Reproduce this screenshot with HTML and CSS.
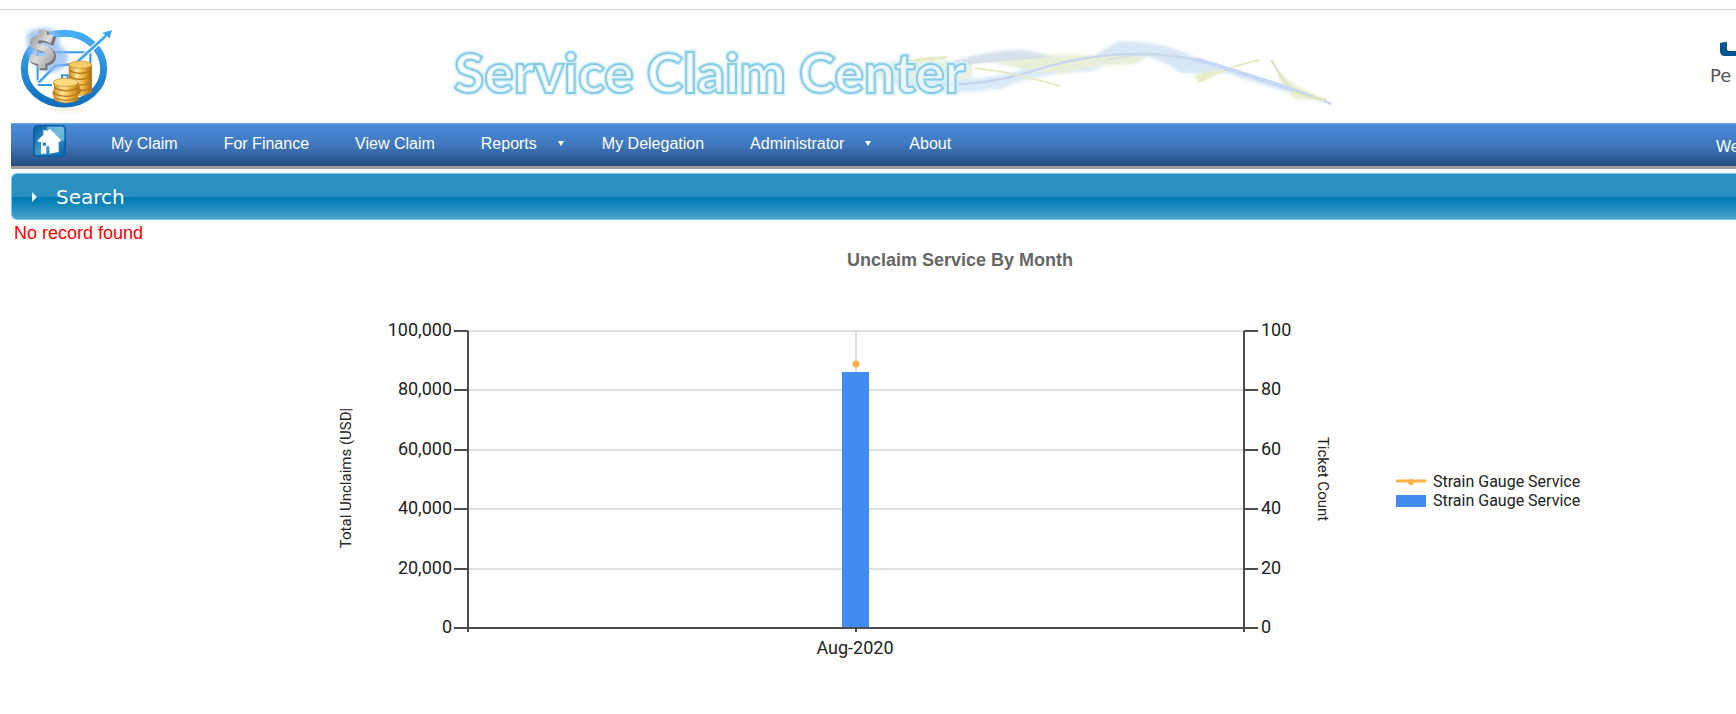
FILE: index.html
```html
<!DOCTYPE html>
<html lang="en">
<head>
<meta charset="utf-8">
<title>Service Claim Center</title>
<link rel="stylesheet" href="styles.css">
</head>
<body>
<div class="page">
  <header class="header">
    <svg class="logo" viewBox="33 30 360 330" role="img" aria-label="Claims logo">
      <defs>
        <linearGradient id="ring" x1="0" y1="0" x2="0" y2="1"><stop offset="0" stop-color="#45adfa"/><stop offset="1" stop-color="#116fbc"/></linearGradient>
        <linearGradient id="gold" x1="0" y1="0" x2="1" y2="0"><stop offset="0" stop-color="#c98a1c"/><stop offset=".35" stop-color="#ffe79a"/><stop offset=".65" stop-color="#e9b03c"/><stop offset="1" stop-color="#a96a10"/></linearGradient>
        <linearGradient id="steel" x1="0" y1="0" x2="1" y2="1"><stop offset="0" stop-color="#888"/><stop offset=".5" stop-color="#ddd"/><stop offset="1" stop-color="#999"/></linearGradient>
        <filter id="soft" x="-50%" y="-50%" width="200%" height="200%"><feGaussianBlur stdDeviation="7"/></filter>
      </defs>
      <ellipse cx="205" cy="328" rx="55" ry="6" fill="#e8c994" opacity=".4" filter="url(#soft)"/>
      <ellipse cx="192" cy="206" rx="119" ry="106" fill="none" stroke="url(#ring)" stroke-width="21"/>
      <path d="M113 245V157H271V245M113 255H156M186 238V226H203V238" fill="none" stroke="#3399e6" stroke-width="6"/>
      <path d="M116 248L166 197L225 192L318 107" fill="none" stroke="#fff" stroke-width="15"/>
      <path d="M116 248L166 197L225 192L318 107" fill="none" stroke="#3da4f2" stroke-width="8"/>
      <path d="M336 90L307 99L329 115Z" fill="#3da4f2"/>
      <path d="M80 102Q115 72 166 92Q185 112 177 137Q215 155 198 193Q165 230 122 207Q84 184 83 139Z" fill="#8db8f3" opacity=".75" filter="url(#soft)"/>
      <path d="M164 113L143 111V97H125V111Q99 113 98 132Q99 148 127 152Q151 158 145 173Q131 183 99 169L94 184Q105 194 122 195V207H139V194Q164 190 165 169Q164 147 132 141Q111 136 119 126Q133 119 158 133Z" fill="#777" stroke="#777" stroke-width="7"/>
      <path d="M157 107L138 106V92H120V106Q94 109 92 128Q93 145 121 149Q144 155 139 168Q125 178 94 164L89 179Q101 189 117 190V202H134V189Q158 185 160 165Q158 142 127 136Q106 131 113 121Q127 113 151 127Z" fill="url(#steel)" stroke="url(#steel)" stroke-width="5"/>
      <g fill="url(#gold)" stroke="#c98a2a" stroke-width="2">
        <path d="M207 194V278Q240 296 275 275V194Z"/>
        <path d="M207 211Q240 230 275 211M207 229Q240 248 275 229M207 246Q240 265 275 246M207 263Q240 281 275 263" fill="none" stroke="#b87816" stroke-width="4"/>
        <ellipse cx="241" cy="194" rx="34" ry="11" fill="#f8cc67"/>
        <path d="M160 248L164 262L158 278L164 300Q199 318 235 299L233 286L243 274L235 248Z"/>
        <path d="M162 263Q200 282 236 263M159 279Q200 300 241 277M164 294Q200 309 235 293" fill="none" stroke="#b87816" stroke-width="4"/>
        <ellipse cx="197" cy="247" rx="38" ry="12" fill="#ffdc82"/>
      </g>
    </svg>
    <svg class="banner" viewBox="0 0 890 80" role="img" aria-label="Service Claim Center">
      <defs>
        <filter id="haze" x="-10%" y="-30%" width="120%" height="160%"><feGaussianBlur stdDeviation="5"/></filter>
        <filter id="edge" x="-10%" y="-30%" width="120%" height="160%"><feGaussianBlur stdDeviation="2"/></filter>
      </defs>
      <g transform="translate(410 -5) scale(.3333)">
        <g filter="url(#haze)">
          <path d="M20 130Q90 105 180 100L340 115L330 185Q150 205 20 150Z" fill="#e5edda" opacity=".8"/>
          <path d="M90 160Q360 175 470 137Q650 80 770 98L700 138Q500 150 430 190Q280 215 130 190Z" fill="#d9ebf9"/>
          <path d="M340 94Q550 85 720 91L880 62L920 70L820 118Q680 120 610 146Q460 135 340 94Z" fill="#e8eed8"/>
          <path d="M270 111Q410 70 500 76L575 92Q410 108 270 123Z" fill="#d8e1ee"/>
          <path d="M705 90L775 49Q910 45 1020 104L1200 158L1415 237Q1290 210 1100 144H960Q905 96 820 90Z" fill="#d8e7f5"/>
          <path d="M1000 150L1100 128L1020 173Z" fill="#e7edc4"/>
          <path d="M1250 125Q1280 180 1400 222L1310 225Q1260 195 1250 125Z" fill="#e8edd4"/>
        </g>
        <g fill="none" filter="url(#edge)">
          <path d="M250 181Q410 175 530 134Q720 76 900 89Q1030 99 1150 145Q1300 190 1415 237" stroke="#c9d4ee" stroke-width="7"/>
          <path d="M270 119Q410 106 560 94M740 105Q870 75 1000 100" stroke="#d3dbe5" stroke-width="4"/>
          <path d="M345 130Q450 140 600 183M1015 170Q1110 122 1200 105" stroke="#e6ebc6" stroke-width="6"/>
          <path d="M1235 105Q1275 183 1310 203Q1350 219 1400 225" stroke="#dce3c2" stroke-width="7"/>
          <path d="M1010 103Q1150 145 1300 195" stroke="#c6d8f8" stroke-width="12"/>
          <path d="M120 118Q190 97 260 98" stroke="#e5eac0" stroke-width="9"/>
        </g>
      </g>
      <text class="banner-glow" x="4" y="63">Service Claim Center</text>
      <text class="banner-text" x="4" y="63">Service Claim Center</text>
    </svg>
    <div class="brand">
      <svg class="brand-mark" viewBox="0 0 16 14" aria-hidden="true"><path d="M0 1Q3 0 7 0V8Q8 9 10 9H16V14H5Q0 14 0 9Z" fill="#00558f"/></svg>
      <span class="brand-name">Pe</span>
    </div>
  </header>

  <nav class="nav" aria-label="Main">
    <a class="home" href="#" aria-label="Home">
      <svg viewBox="0 0 99 96" aria-hidden="true">
        <defs><linearGradient id="tile" x1="0" y1="0" x2="1" y2="1"><stop offset="0" stop-color="#075ba2"/><stop offset=".5" stop-color="#3f9bcb"/><stop offset="1" stop-color="#0b65ad"/></linearGradient></defs>
        <rect width="99" height="96" rx="14" fill="#0b5da5"/>
        <rect x="5" y="4" width="89" height="87" rx="10" fill="url(#tile)"/>
        <path d="M42 5H84Q94 5 94 17V48Q69 48 42 23Z" fill="#88cce2" opacity=".65"/>
        <path d="M13 47L31 29V16H41V20L50 11L84 45L80 51H77V81L49 86V64H40V86H24V51H17Z" fill="#fff"/>
        <path d="M29 53H39V62H29Z" fill="#247fb8"/>
      </svg>
    </a>
    <a class="item" href="#">My Claim</a>
    <a class="item" href="#">For Finance</a>
    <a class="item" href="#">View Claim</a>
    <a class="item has-menu" href="#">Reports</a>
    <a class="item" href="#">My Delegation</a>
    <a class="item has-menu" href="#">Administrator</a>
    <a class="item" href="#">About</a>
    <span class="welcome">We</span>
  </nav>

  <button class="search" type="button" aria-expanded="false">Search</button>

  <main>
    <p class="message">No record found</p>
    <h1 class="title">Unclaim Service By Month</h1>
    <div class="chart">
      <svg class="plot" viewBox="0 0 1020 360" role="img" aria-label="Unclaim service by month, August 2020">
        <path class="grid" d="M138 21H914M138 80H914M138 140H914M138 199H914M138 259H914M526 21V318"/>
        <rect class="bar" x="512" y="62" width="27" height="256"/>
        <circle class="dot" cx="526" cy="54" r="3.5"/>
        <path class="axis" d="M138 21V322M914 21V322M124 318H928M526 318V322M124 21H138M124 80H138M124 140H138M124 199H138M124 259H138M914 21H928M914 80H928M914 140H928M914 199H928M914 259H928"/>
        <g class="label end">
          <text x="122" y="26">100,000</text><text x="122" y="85">80,000</text><text x="122" y="145">60,000</text>
          <text x="122" y="204">40,000</text><text x="122" y="264">20,000</text><text x="122" y="323">0</text>
        </g>
        <g class="label">
          <text x="931" y="26">100</text><text x="931" y="85">80</text><text x="931" y="145">60</text>
          <text x="931" y="204">40</text><text x="931" y="264">20</text><text x="931" y="323">0</text>
        </g>
        <text class="label middle" x="525" y="344">Aug-2020</text>
        <text class="axis-title" transform="translate(21 168) rotate(-90)">Total Unclaims (USD|</text>
        <text class="axis-title" transform="translate(988 169) rotate(90)">Ticket Count</text>
      </svg>
      <ul class="legend">
        <li><svg class="key" viewBox="0 0 30 12" aria-hidden="true"><path d="M0 5H30" stroke="#ffb244" stroke-width="3"/><circle cx="15" cy="6" r="3" fill="#ffb244"/></svg>Strain Gauge Service</li>
        <li><svg class="key" viewBox="0 0 30 12" aria-hidden="true"><path d="M0 0H30V12H0Z" fill="#418cf0"/></svg>Strain Gauge Service</li>
      </ul>
    </div>
  </main>
</div>
</body>
</html>
```

FILE: styles.css
```css
* { box-sizing: border-box; }
body {
  margin: 0;
  background: #fff;
  font: 16px/20px "Liberation Sans", Arial, sans-serif;
}
.page {
  margin-top: 9px;
  padding-left: 11px;
  border-top: 1px solid #d8d8d8;
  overflow: hidden;
}
.header {
  display: flex;
  height: 113px;
}
.logo { flex: none; width: 120px; height: 110px; }
.banner { flex: none; width: 890px; height: 80px; margin: 20px 0 0 319px; }
.banner text {
  font: 900 55px Lato, sans-serif;
}
.banner-glow { fill: rgba(255, 255, 255, .3); stroke: #d8f0f9; stroke-width: 5px; }
.banner-text { fill: rgba(255, 255, 255, .3); stroke: #86cce6; stroke-width: 2px; }
.brand {
  display: flex;
  flex-direction: column;
  width: 26px;
  margin-left: auto;
  padding-top: 32px;
}
.brand-mark { width: 16px; height: 14px; margin-left: 10px; }
.brand-name { margin-top: 10px; font: 18px/20px "DejaVu Sans", sans-serif; color: #555; }

.nav {
  display: flex;
  height: 46px;
  border-top: 1px solid #6da6e0;
  border-bottom: 3px solid #9d9da0;
  background: linear-gradient(#4a8bdc, #3f78bd 50%, #264d7e);
  color: #fff;
}
.home { width: 33px; margin: 1px 22px 0; }
.home svg { display: block; width: 33px; height: 32px; }
.item {
  padding: 0 23px;
  color: #fff;
  line-height: 40px;
  text-decoration: none;
  white-space: nowrap;
}
.has-menu { display: flex; align-items: flex-start; gap: 21px; padding-right: 15px; }
.has-menu::after {
  content: "";
  margin-top: 17px;
  border: 3px solid transparent;
  border-top: 5px solid #fff;
  border-bottom: 0;
}
.welcome { width: 20px; margin-left: auto; line-height: 45px; }

.search {
  display: flex;
  align-items: center;
  gap: 19px;
  width: 100%;
  height: 47px;
  margin: 4px 0 0;
  padding: 0 20px;
  border: 1px solid #70ccf2;
  border-right: 0;
  border-radius: 6px 0 0 6px;
  background: linear-gradient(#2a90c0 50%, #007ab3 50%, #0680b7 62%, #459fc9 95%);
  color: #fff;
  font: 20px/24px "DejaVu Sans", Verdana, sans-serif;
}
.search::before {
  content: "";
  border: 5px solid transparent;
  border-left: 5px solid #e4f7ff;
  border-right: 0;
}

.message { margin: 3px; color: #f00; font-size: 18px; line-height: 20px; }
.title {
  margin: 7px 0 40px 173px;
  color: #666;
  font-size: 18px;
  line-height: 20px;
  text-align: center;
}
.chart {
  display: flex;
  align-items: center;
  padding-left: 319px;
  font-family: Roboto, sans-serif;
}
.plot { flex: 0 1 1020px; min-width: 0; }
.grid { fill: none; stroke: #e0e0e0; stroke-width: 2px; }
.axis { fill: none; stroke: #4c4c4c; stroke-width: 2px; }
.bar { fill: #418cf0; }
.dot { fill: #ffb244; }
.label { font-size: 18px; fill: #222; }
.axis-title { font-size: 15px; fill: #222; text-anchor: middle; }
.end { text-anchor: end; }
.middle { text-anchor: middle; }
.legend {
  margin: 0 0 0 46px;
  padding: 2px 0 0;
  list-style: none;
  color: #222;
  font-size: 16px;
  line-height: 19px;
  white-space: nowrap;
}
.legend li { display: flex; align-items: center; gap: 7px; }
.key { width: 30px; height: 12px; }
```
